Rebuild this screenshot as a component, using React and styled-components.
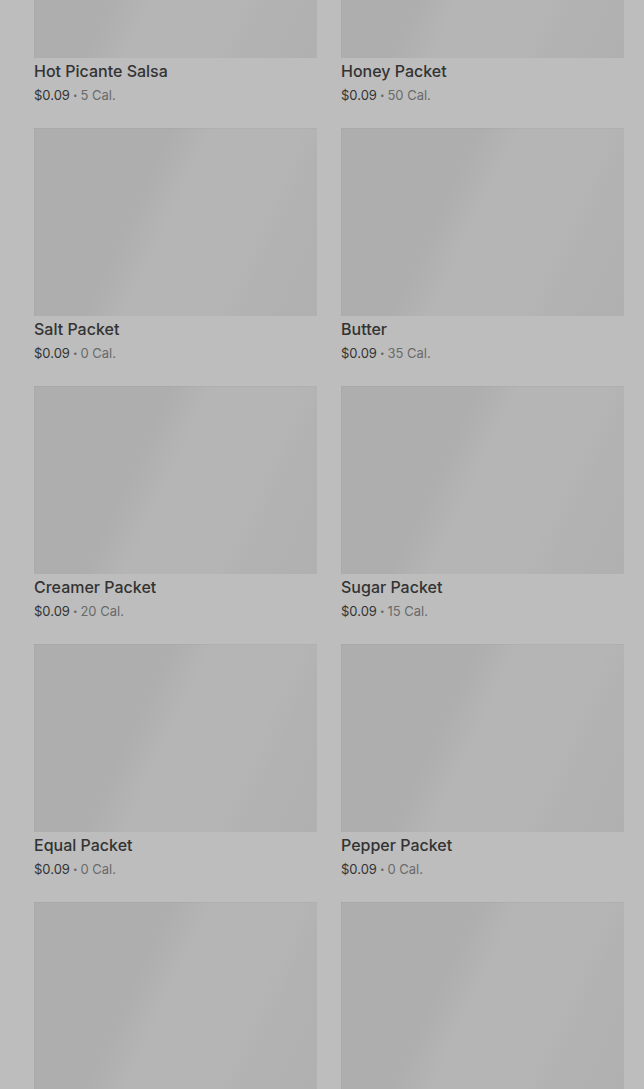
import React from "react";
import styled, { createGlobalStyle } from "styled-components";

const items = [
  { name: "Hot Picante Salsa", price: "$0.09", cal: 5 },
  { name: "Honey Packet", price: "$0.09", cal: 50 },
  { name: "Salt Packet", price: "$0.09", cal: 0 },
  { name: "Butter", price: "$0.09", cal: 35 },
  { name: "Creamer Packet", price: "$0.09", cal: 20 },
  { name: "Sugar Packet", price: "$0.09", cal: 15 },
  { name: "Equal Packet", price: "$0.09", cal: 0 },
  { name: "Pepper Packet", price: "$0.09", cal: 0 },
  { name: "Ketchup Packet", price: "$0.09", cal: 10 },
  { name: "Mustard Packet", price: "$0.09", cal: 0 },
];

export default function App() {
  return (
    <>
      <GlobalStyle />
      <Page>
        <Grid>
          {items.map((item) => (
            <Card key={item.name}>
              <Thumb />
              <Title>{item.name}</Title>
              <Meta>
                <Price>{item.price}</Price>
                <Dot>•</Dot>
                {item.cal} Cal.
              </Meta>
            </Card>
          ))}
        </Grid>
      </Page>
    </>
  );
}

const GlobalStyle = createGlobalStyle`
  html, body {
    margin: 0;
    padding: 0;
    background: #bdbdbd;
    overflow: hidden;
  }
  body {
    font-family: Inter, "Noto Sans", sans-serif;
  }
`;

const Page = styled.div`
  height: 1089px;
  overflow: hidden;
  padding: 0 20px 0 34px;
`;

const Grid = styled.div`
  display: grid;
  grid-template-columns: 283px 283px;
  column-gap: 24px;
  row-gap: 22px;
  margin-top: -130px;
`;

const Card = styled.div`
  display: flex;
  flex-direction: column;
`;

const Thumb = styled.div`
  height: 188px;
  box-shadow: inset 0 1px 0 rgba(0, 0, 0, 0.025), inset 1px 0 0 rgba(0, 0, 0, 0.02);
  background: linear-gradient(
    115deg,
    #aeaeae 0%,
    #aeaeae 37%,
    #b1b1b1 42%,
    #b5b5b5 48%,
    #b5b5b5 72%,
    #b2b2b2 80%,
    #b0b0b0 100%
  );
`;

const Title = styled.div`
  margin-top: 1px;
  font-size: 16px;
  line-height: 24px;
  font-weight: 500;
  color: #333333;
`;

const Meta = styled.div`
  margin-top: 1px;
  font-size: 13px;
  line-height: 22px;
  color: #6a6a6a;
`;

const Price = styled.span`
  color: #333333;
`;

const Dot = styled.span`
  font-size: 8px;
  margin: 0 3px;
  vertical-align: 2px;
`;
